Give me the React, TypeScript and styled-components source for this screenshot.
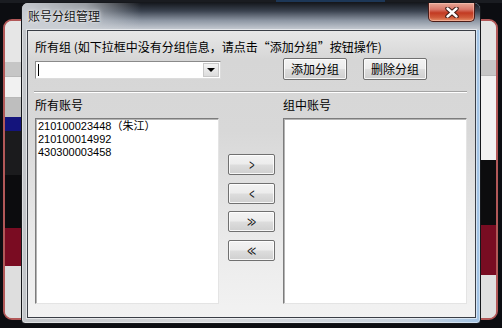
import React from "react";
import styled, { createGlobalStyle } from "styled-components";

const GlobalStyle = createGlobalStyle`
  html, body {
    margin: 0;
    padding: 0;
    background: #0c0d11;
    overflow: hidden;
  }
  * { box-sizing: border-box; }
`;

const UI_FONT = `"Noto Sans CJK SC", "Noto Sans", sans-serif`;

// ---------- desktop / window behind the dialog ----------

const Screen = styled.div`
  position: relative;
  width: 502px;
  height: 328px;
  padding: 19px 4px 8px 3px;
  background:
    linear-gradient(to right, #1a1c21 276px, #1d3757 276px, #1d3757 385px, #1a1c21 385px) top / 100% 3px no-repeat,
    #0c0d11;
`;

const BehindWindow = styled.div`
  height: 100%;
  border: 2px solid #b25858;
  border-radius: 9px;
  background: #e2e2e2;
  display: flex;
  justify-content: space-between;
  overflow: hidden;
`;

const SidePane = styled.div<{ $width: number }>`
  width: ${(p) => p.$width}px;
  display: flex;
  flex-direction: column;
`;

const Band = styled.div<{ $h: number; $color: string; $line?: boolean }>`
  height: ${(p) => p.$h}px;
  flex: none;
  background: ${(p) => p.$color};
  border-bottom: ${(p) => (p.$line ? "1px solid #b8b8b8" : "none")};
`;

const leftBands: [number, string, boolean?][] = [
  [41, "#e6e6e6"],
  [15, "#c6c6c6", true],
  [21, "#f1f1f1", true],
  [19, "#bebebe"],
  [14, "#14147c"],
  [44, "#1b1b1d"],
  [53, "#0c0c0e"],
  [38, "#7a0c22"],
  [60, "#dedede"],
];

const rightBands: [number, string, boolean?][] = [
  [39, "#e4e4e4"],
  [16, "#c6c6c6", true],
  [84, "#f2f2f2"],
  [65, "#0c0c0e"],
  [50, "#780c22"],
  [60, "#e0e0e0"],
];

// ---------- dialog frame ----------

const Dialog = styled.div`
  position: absolute;
  left: 21px;
  top: 2px;
  width: 460px;
  height: 322px;
  border: 1px solid #16181c;
  border-radius: 7px 7px 4px 4px;
  padding: 0 4px 5px 5px;
  display: flex;
  flex-direction: column;
  background: linear-gradient(to right, #c2c5c9 0%, #d6d8db 40%, #c8d2dd 85%, #a2c3e4 100%);
  box-shadow: inset 0 0 0 1px rgba(255, 255, 255, 0.45);
  font-family: ${UI_FONT};
`;

const TitleBar = styled.div`
  height: 27px;
  margin: 0 -4px 0 -5px;
  padding: 0 5px 0 6px;
  display: flex;
  align-items: flex-start;
  border-radius: 6px 6px 0 0;
  background:
    linear-gradient(to right, rgba(206, 210, 215, 0.95) 0%, rgba(206, 210, 215, 0.7) 14%, rgba(206, 210, 215, 0) 26%),
    linear-gradient(to bottom, #16191f 0%, #3b4350 30%, #8d96a3 65%, #c9ced5 100%);
`;

const Title = styled.div`
  margin-top: 5px;
  font-size: 12px;
  line-height: 16px;
  color: #151515;
  text-shadow: 0 0 5px rgba(255, 255, 255, 0.95), 0 0 2px rgba(255, 255, 255, 0.9);
  flex: 1;
`;

const CloseButton = styled.div`
  width: 47px;
  height: 19px;
  display: flex;
  align-items: center;
  justify-content: center;
  border: 1px solid #4a1c18;
  border-top: none;
  border-radius: 0 0 5px 5px;
  background: linear-gradient(to bottom, #e9a896 0%, #d9786a 35%, #c23a22 55%, #cf5a3a 80%, #e6906a 100%);
  box-shadow: inset 0 0 0 1px rgba(255, 210, 200, 0.45);
`;

const Client = styled.div`
  flex: 1;
  border: 1px solid #3a3e46;
  box-shadow: 0 0 0 1px rgba(255, 255, 255, 0.55);
  padding: 8px 8px 13px 7px;
  display: flex;
  flex-direction: column;
  background: linear-gradient(to bottom, #e8e8e8 0%, #d6d6d6 10%, #d8d8d8 35%, #ebebeb 75%, #f2f2f2 100%);
  color: #000;
`;

// ---------- content ----------

const Label = styled.div`
  font-size: 12px;
  line-height: 16px;
  white-space: nowrap;
`;

const GroupRow = styled.div`
  margin-top: 3px;
  height: 22px;
  display: flex;
  align-items: flex-start;
`;

const Combo = styled.div`
  margin-top: 3px;
  width: 186px;
  height: 18px;
  display: flex;
  border: 1px solid #8a8a8a;
  border-right-color: #dcdcdc;
  border-bottom-color: #dcdcdc;
  background: #fff;
  padding: 1px;
`;

const ComboField = styled.div`
  flex: 1;
  display: flex;
  align-items: center;
  padding-left: 1px;
`;

const Caret = styled.span`
  width: 1px;
  height: 12px;
  background: #000;
`;

const ComboArrow = styled.div`
  width: 16px;
  display: flex;
  align-items: center;
  justify-content: center;
  border: 1px solid #c8c8c8;
  background: linear-gradient(to bottom, #f4f4f4, #dcdcdc);

  &::after {
    content: "";
    border-left: 4px solid transparent;
    border-right: 4px solid transparent;
    border-top: 4px solid #000;
  }
`;

const Actions = styled.div`
  margin-left: 62px;
  display: flex;
  gap: 16px;
`;

const PushButton = styled.div<{ $w: number; $h: number }>`
  width: ${(p) => p.$w}px;
  height: ${(p) => p.$h}px;
  display: flex;
  align-items: center;
  justify-content: center;
  border: 1px solid #707070;
  border-radius: 2px;
  background: linear-gradient(to bottom, #f3f3f3 0%, #ececec 48%, #dddddd 52%, #cfcfcf 100%);
  box-shadow: inset 0 0 0 1px rgba(255, 255, 255, 0.8);
  font-size: 12px;
  line-height: 14px;
  color: #000;
`;

const Separator = styled.div`
  margin-top: 11px;
  margin-left: -1px;
  height: 2px;
  border-top: 1px solid #a3a3a3;
  border-bottom: 1px solid #ffffff;
`;

const Transfer = styled.div`
  margin-top: 4px;
  display: grid;
  grid-template-columns: 184px 64px 184px;
  grid-template-rows: 16px 186px;
  row-gap: 5px;
`;

const ListBox = styled.div`
  background: #fff;
  border: 1px solid #7c7c7c;
  border-right-color: #e4e4e4;
  border-bottom-color: #e4e4e4;
  box-shadow: inset 1px 1px 0 #b4b4b4;
  padding: 1px 2px;
  font-family: "Liberation Sans", "Noto Sans CJK SC", sans-serif;
  font-size: 11px;
  line-height: 13px;
`;

const Item = styled.div`
  white-space: nowrap;
`;

const MoveColumn = styled.div`
  padding-top: 36px;
  display: flex;
  flex-direction: column;
  align-items: center;
  gap: 7.5px;
`;

const Chevron = styled.span`
  font-family: "Liberation Sans", sans-serif;
  font-size: 15px;
  line-height: 15px;
  letter-spacing: -3px;
  transform: scaleX(0.6);
  color: #111;
`;

function CloseGlyph() {
  return (
    <svg width="14" height="11" viewBox="0 0 14 11">
      <path d="M2.5 1.5 L11.5 9.5 M11.5 1.5 L2.5 9.5" stroke="#3b1812" strokeWidth="4.4" strokeLinecap="round" />
      <path d="M2.5 1.5 L11.5 9.5 M11.5 1.5 L2.5 9.5" stroke="#ffffff" strokeWidth="2.4" strokeLinecap="round" />
    </svg>
  );
}

const accounts = ["210100023448（朱江）", "210100014992", "430300003458"];
const moves = [">", "<", ">>", "<<"];

export default function App() {
  return (
    <>
      <GlobalStyle />
      <Screen>
        <BehindWindow>
          <SidePane $width={16}>
            {leftBands.map(([h, c, l], i) => (
              <Band key={i} $h={h} $color={c} $line={l} />
            ))}
          </SidePane>
          <SidePane $width={15}>
            {rightBands.map(([h, c, l], i) => (
              <Band key={i} $h={h} $color={c} $line={l} />
            ))}
          </SidePane>
        </BehindWindow>

        <Dialog>
          <TitleBar>
            <Title>账号分组管理</Title>
            <CloseButton>
              <CloseGlyph />
            </CloseButton>
          </TitleBar>
          <Client>
            <Label>所有组 (如下拉框中没有分组信息，请点击“添加分组”按钮操作)</Label>
            <GroupRow>
              <Combo>
                <ComboField>
                  <Caret />
                </ComboField>
                <ComboArrow />
              </Combo>
              <Actions>
                <PushButton $w={64} $h={22}>添加分组</PushButton>
                <PushButton $w={64} $h={22}>删除分组</PushButton>
              </Actions>
            </GroupRow>
            <Separator />
            <Transfer>
              <Label>所有账号</Label>
              <span />
              <Label>组中账号</Label>
              <ListBox>
                {accounts.map((a) => (
                  <Item key={a}>{a}</Item>
                ))}
              </ListBox>
              <MoveColumn>
                {moves.map((m) => (
                  <PushButton key={m} $w={47} $h={21}>
                    <Chevron>{m}</Chevron>
                  </PushButton>
                ))}
              </MoveColumn>
              <ListBox />
            </Transfer>
          </Client>
        </Dialog>
      </Screen>
    </>
  );
}
